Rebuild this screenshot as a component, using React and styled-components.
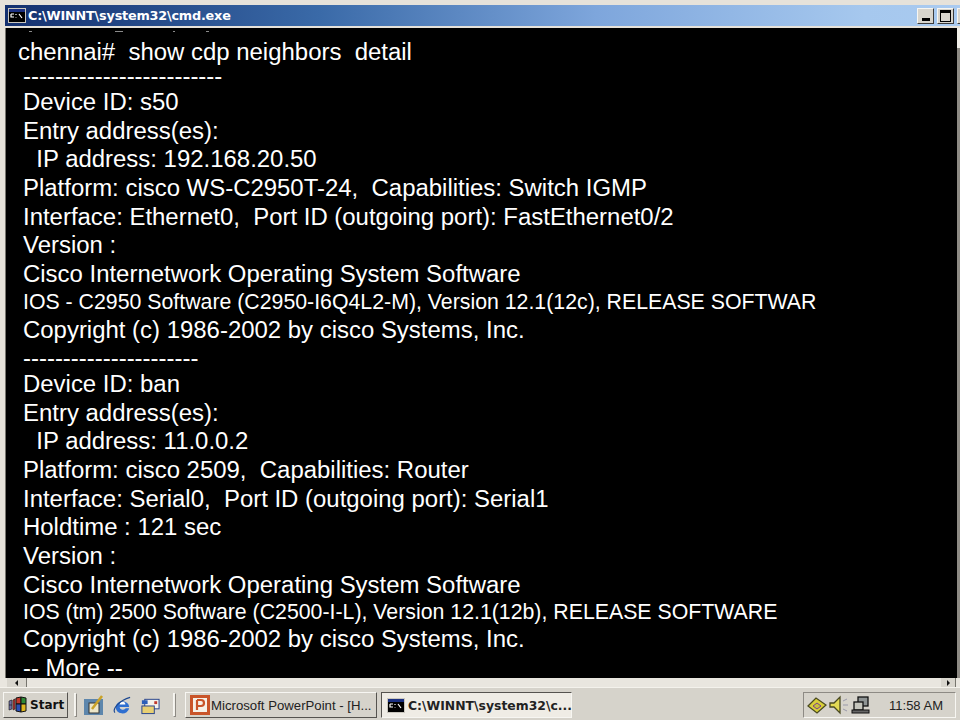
import React from 'react';
import styled, { createGlobalStyle } from 'styled-components';

const Global = createGlobalStyle`
  html, body { margin: 0; padding: 0; background: #d8d4cc; }
  #root { width: 960px; height: 720px; overflow: hidden; }
`;

const Desktop = styled.div`
  width: 960px;
  height: 720px;
  overflow: hidden;
  display: flex;
  flex-direction: column;
  background: #d6d3cb;
  font-family: "Liberation Sans", Arial, sans-serif;
`;

const Window = styled.div`
  height: 687px;
  flex: none;
  display: flex;
  flex-direction: column;
  background: #e6e2da;
  padding-top: 5px;
  box-sizing: border-box;
`;

const TitleBar = styled.div`
  height: 21px;
  flex: none;
  margin-left: 5px;
  padding-left: 3px;
  display: flex;
  align-items: center;
  gap: 2px;
  overflow: hidden;
  background: linear-gradient(90deg, #14306f 0%, #3a6aa8 33%, #7ea6dc 62%, #a6c8ee 90%, #a9caf0 100%);
`;

const TitleIcon = styled.svg`
  width: 18px;
  height: 15px;
  flex: none;
`;

const TitleText = styled.span`
  flex: 1;
  font-family: "DejaVu Sans", Verdana, sans-serif;
  font-weight: 700;
  font-size: 12.8px;
  letter-spacing: -0.2px;
  color: #fff;
`;

const WinButton = styled.div`
  width: 17px;
  height: 16px;
  flex: none;
  box-sizing: border-box;
  margin-left: 1px;
  margin-right: ${p => (p.$cut ? -14 : 0)}px;
  background: #d8d5cd;
  border: 1px solid;
  border-color: #f7f6f2 #3c3c3c #3c3c3c #f7f6f2;
  display: flex;
  align-items: center;
  justify-content: center;
`;

const MinGlyph = styled.div`
  width: 8px;
  height: 3px;
  background: #000;
  margin-top: 8px;
`;

const MaxGlyph = styled.div`
  width: 9px;
  height: 8px;
  border: 1px solid #000;
  border-top-width: 3px;
`;

const Body = styled.div`
  flex: 1;
  display: flex;
  min-height: 0;
  margin-top: 2px;
`;

const LeftEdge = styled.div`
  width: 5px;
  flex: none;
  background: #e6e2da;
  border-right: 1px solid #77756e;
`;

const Console = styled.div`
  flex: 1;
  background: #000;
  color: #fff;
  padding-left: 12px;
`;

const Specks = styled.div`
  height: 12px;
  display: flex;
  align-items: flex-start;
  margin-top: 3px;
  margin-bottom: -3px;
`;

const Speck = styled.i`
  display: block;
  width: ${p => p.$w}px;
  height: 1px;
  margin-left: ${p => p.$left}px;
  background: #8b8b8b;
`;

const Line = styled.div`
  white-space: pre;
  height: ${p => p.$h || 28.7}px;
  line-height: ${p => p.$h || 28.7}px;
  margin-top: ${p => p.$top || 0}px;
  font-size: ${p => (p.$small ? 21.3 : 23.95)}px;
  padding-left: ${p => (p.$head ? 0 : 5)}px;
`;

const RightEdge = styled.div`
  width: 3px;
  flex: none;
  background: linear-gradient(180deg, #f2f0ea 0 20px, #8d8a84 20px 100%);
`;

const Strip = styled.div`
  height: 9px;
  flex: none;
  display: flex;
  justify-content: space-between;
  background: #e9e6df;
  padding: 0 4px 0 7px;
`;

const ScrollCap = styled.div`
  width: ${p => p.$w}px;
  display: flex;
  align-items: center;
  justify-content: center;
  background: #d8d5cd;
  border-right: 1px solid #77756e;
`;

const Arrow = styled.div`
  width: 0;
  height: 0;
  border-top: 3px solid transparent;
  border-bottom: 3px solid transparent;
  border-right: ${p => (p.$right ? 'none' : '3px solid #111')};
  border-left: ${p => (p.$right ? '3px solid #111' : 'none')};
`;

const TaskBar = styled.div`
  flex: 1;
  display: flex;
  align-items: center;
  padding: 2px 4px 0 3px;
  background: #d6d3cb;
  border-top: 1px solid #f4f2ec;
`;

const StartButton = styled.div`
  width: 65px;
  height: 26px;
  flex: none;
  display: flex;
  align-items: center;
  gap: 2px;
  padding-left: 4px;
  box-sizing: border-box;
  border: 1px solid;
  border-color: #f7f6f2 #55534f #55534f #f7f6f2;
  font-family: "DejaVu Sans", sans-serif;
  font-weight: 700;
  font-size: 12px;
  color: #111;
`;

const Divider = styled.div`
  width: 1px;
  height: 22px;
  flex: none;
  margin: 0 ${p => p.$after}px 0 ${p => p.$before}px;
  background: #f2f0ea;
  border: 1px solid;
  border-color: #f7f6f2 #8d8a84 #8d8a84 #f7f6f2;
`;

const Quick = styled.div`
  display: flex;
  align-items: center;
  gap: 8px;
`;

const QuickIcon = styled.svg`
  width: 20px;
  height: 21px;
  flex: none;
`;

const TaskButton = styled.div`
  width: ${p => p.$w}px;
  height: 26px;
  flex: none;
  box-sizing: border-box;
  display: flex;
  align-items: center;
  gap: ${p => (p.$active ? 3 : 1)}px;
  padding: 0 2px 0 ${p => (p.$active ? 5 : 4)}px;
  margin-right: 4px;
  white-space: nowrap;
  color: #222;
  border: 1px solid;
  border-color: ${p => (p.$active ? '#55534f #f7f6f2 #f7f6f2 #55534f' : '#f7f6f2 #55534f #55534f #f7f6f2')};
  background: ${p => (p.$active ? '#efece5' : '#d6d3cb')};
  font-family: ${p => (p.$active ? '"DejaVu Sans", sans-serif' : '"Liberation Sans", sans-serif')};
  font-weight: ${p => (p.$active ? 700 : 400)};
  font-size: ${p => (p.$active ? 12.4 : 13.2)}px;
`;

const Spacer = styled.div`
  flex: 1;
`;

const Tray = styled.div`
  width: 153px;
  height: 26px;
  flex: none;
  box-sizing: border-box;
  display: flex;
  align-items: center;
  gap: 2px;
  padding-left: 3px;
  border: 1px solid;
  border-color: #8d8a84 #f7f6f2 #f7f6f2 #8d8a84;
  font-size: 13px;
  color: #222;
`;

const TrayIcon = styled.svg`
  width: 20px;
  height: 20px;
  flex: none;
`;

const Clock = styled.span`
  margin-left: auto;
  margin-right: 12px;
`;

const lines = [
  { t: 'chennai#  show cdp neighbors  detail', head: true, h: 24 },
  { t: '-------------------------', h: 24 },
  { t: 'Device ID: s50' },
  { t: 'Entry address(es):' },
  { t: '  IP address: 192.168.20.50' },
  { t: 'Platform: cisco WS-C2950T-24,  Capabilities: Switch IGMP' },
  { t: 'Interface: Ethernet0,  Port ID (outgoing port): FastEthernet0/2' },
  { t: 'Version :' },
  { t: 'Cisco Internetwork Operating System Software' },
  { t: 'IOS - C2950 Software (C2950-I6Q4L2-M), Version 12.1(12c), RELEASE SOFTWAR', small: true, h: 26 },
  { t: 'Copyright (c) 1986-2002 by cisco Systems, Inc.', h: 30 },
  { t: '----------------------', h: 25 },
  { t: 'Device ID: ban' },
  { t: 'Entry address(es):' },
  { t: '  IP address: 11.0.0.2' },
  { t: 'Platform: cisco 2509,  Capabilities: Router' },
  { t: 'Interface: Serial0,  Port ID (outgoing port): Serial1' },
  { t: 'Holdtime : 121 sec' },
  { t: 'Version :' },
  { t: 'Cisco Internetwork Operating System Software' },
  { t: 'IOS (tm) 2500 Software (C2500-I-L), Version 12.1(12b), RELEASE SOFTWARE', small: true, h: 26 },
  { t: 'Copyright (c) 1986-2002 by cisco Systems, Inc.', h: 28.5 },
  { t: '-- More --', h: 20, top: 4 },
];

function CmdIcon() {
  return (
    <TitleIcon viewBox="0 0 18 15">
      <rect width="18" height="15" fill="#c9c6be" />
      <rect x="1" y="1" width="16" height="3" fill="#1a2f80" />
      <rect x="1" y="4" width="16" height="10" fill="#000" />
      <path d="M3 6H6M3 6V9H6M8 6V7M8 9V9.500M11 6L14 10" stroke="#fff" strokeWidth="1.200" fill="none" />
    </TitleIcon>
  );
}

export default function App() {
  return (
    <Desktop>
      <Global />
      <Window>
        <TitleBar>
          <CmdIcon />
          <TitleText>C:\WINNT\system32\cmd.exe</TitleText>
          <WinButton><MinGlyph /></WinButton>
          <WinButton><MaxGlyph /></WinButton>
          <WinButton $cut />
        </TitleBar>
        <Body>
          <LeftEdge />
          <Console>
            <Specks>
              <Speck $left={11} $w={3} />
              <Speck $left={83} $w={8} />
              <Speck $left={50} $w={2} />
              <Speck $left={31} $w={3} />
            </Specks>
            {lines.map((l, i) => (
              <Line key={i} $small={l.small} $head={l.head} $h={l.h} $top={l.top}>{l.t}</Line>
            ))}
          </Console>
          <RightEdge />
        </Body>
        <Strip>
          <ScrollCap $w={19}><Arrow /></ScrollCap>
          <ScrollCap $w={14}><Arrow $right /></ScrollCap>
        </Strip>
      </Window>
      <TaskBar>
        <StartButton>
          <svg width="20" height="18" viewBox="0 0 20 18">
            <path d="M1 5l3-1v9l-3 1zM1 9h3" fill="#6d6da0" stroke="#111" strokeWidth=".6" />
            <path d="M5 4l2-1v10l-2 1z" fill="#c03b3b" stroke="#111" strokeWidth=".6" />
            <path d="M8 2l5-1v7H8z" fill="#c0392b" stroke="#111" />
            <path d="M13 1l5 1v6h-5z" fill="#2f8a35" stroke="#111" />
            <path d="M8 8h5v8l-5-1z" fill="#2c4fb5" stroke="#111" />
            <path d="M13 8h5v7l-5 1z" fill="#e0b71f" stroke="#111" />
          </svg>
          Start
        </StartButton>
        <Divider $before={6} $after={7} />
        <Quick>
          <QuickIcon viewBox="0 0 20 21">
            <rect x="0" y="4" width="19" height="16" fill="#5d86ac" />
            <rect x="5" y="8" width="10" height="10" fill="#ece6c8" stroke="#333" />
            <path d="M8 14L18 1" stroke="#c9a227" strokeWidth="2.500" />
          </QuickIcon>
          <QuickIcon viewBox="0 0 21 21">
            <path d="M4 12a7 6 0 1 1 14 0H8a3.500 3 0 0 0 6.500 1.500h3.500A7 6 0 0 1 4 12z" fill="#2f6fd0" />
            <path d="M8 9.500h6a3 3 0 0 0-6 0z" fill="#fff" />
            <path d="M3 18C0 14 8 5 19 2" stroke="#1c478f" strokeWidth="1.200" fill="none" />
          </QuickIcon>
          <QuickIcon viewBox="0 0 21 21">
            <rect x="5" y="4" width="15" height="10" fill="#f4f2ea" stroke="#24408a" />
            <rect x="2" y="11" width="13" height="8" fill="#e8cf72" stroke="#24408a" />
            <path d="M2 5h6v4H2z" fill="#2c5fb8" />
            <rect x="15" y="6" width="3" height="3" fill="#c0392b" />
          </QuickIcon>
        </Quick>
        <Divider $before={13} $after={9} />
        <TaskButton $w={192}>
          <svg width="20" height="20" viewBox="0 0 20 20" style={{ flex: 'none' }}>
            <rect width="20" height="20" fill="#c9552a" />
            <rect x="3" y="3" width="14" height="14" fill="#f6f1e8" />
            <path d="M7 5v10M7 5h4a3 3 0 0 1 0 6H7" stroke="#c9552a" strokeWidth="2.200" fill="none" />
          </svg>
          Microsoft PowerPoint - [H...
        </TaskButton>
        <TaskButton $w={191} $active>
          <CmdIcon />
          C:\WINNT\system32\c...
        </TaskButton>
        <Spacer />
        <Tray>
          <TrayIcon viewBox="0 0 20 20">
            <path d="M1 11L9 3l10 7-9 8z" fill="#d8cf3a" stroke="#4a4a20" strokeWidth="1.300" />
            <path d="M6 11l4-3 4 3-4 3z" fill="#c9c23a" stroke="#7a3f8f" />
          </TrayIcon>
          <TrayIcon viewBox="0 0 20 20">
            <path d="M1 8h4l6-6v16l-6-6H1z" fill="#e3da55" stroke="#4a4a20" strokeWidth="1.300" />
            <path d="M14 6l4-2M14 10h5M14 14l4 2" stroke="#99a" strokeWidth="1" />
          </TrayIcon>
          <TrayIcon viewBox="0 0 20 20">
            <rect x="7" y="2" width="10" height="9" fill="#8f9494" stroke="#111" strokeWidth="1.300" />
            <rect x="3" y="7" width="9" height="8" fill="#c5c5bc" stroke="#111" strokeWidth="1.300" />
            <rect x="1" y="15" width="17" height="3" fill="#666" stroke="#111" />
          </TrayIcon>
          <Clock>11:58 AM</Clock>
        </Tray>
      </TaskBar>
    </Desktop>
  );
}
